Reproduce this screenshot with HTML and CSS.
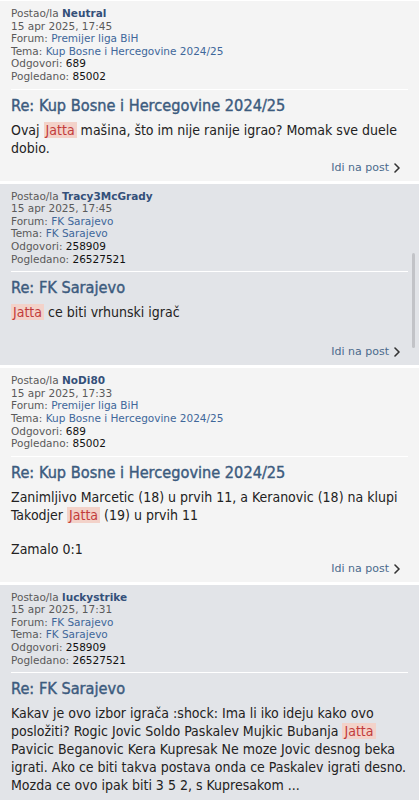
FILE: index.html
```html
<!DOCTYPE html>
<html lang="bs">
<head>
<meta charset="utf-8">
<meta name="viewport" content="width=device-width, initial-scale=1">
<title>Pretraga</title>
<link rel="stylesheet" href="styles.css">
</head>
<body>
<div class="page">
  <div class="post odd">
    <div class="meta">
      <div>Postao/la <a class="user">Neutral</a></div>
      <div>15 apr 2025, 17:45</div>
      <div>Forum: <a class="link">Premijer liga BiH</a></div>
      <div>Tema: <a class="link">Kup Bosne i Hercegovine 2024/25</a></div>
      <div>Odgovori: <span class="num">689</span></div>
      <div>Pogledano: <span class="num">85002</span></div>
    </div>
    <h3 class="title">Re: Kup Bosne i Hercegovine 2024/25</h3>
    <div class="content"><p>Ovaj <span class="hl">Jatta</span> mašina, što im nije ranije igrao? Momak sve duele dobio.</p></div>
    <div class="more"><a class="more-link">Idi na post <svg class="chev" viewBox="0 0 6 10" width="6" height="10"><polyline points="1,1 5,5 1,9" /></svg></a></div>
  </div>

  <div class="post even">
    <div class="meta">
      <div>Postao/la <a class="user">Tracy3McGrady</a></div>
      <div>15 apr 2025, 17:45</div>
      <div>Forum: <a class="link">FK Sarajevo</a></div>
      <div>Tema: <a class="link">FK Sarajevo</a></div>
      <div>Odgovori: <span class="num">258909</span></div>
      <div>Pogledano: <span class="num">26527521</span></div>
    </div>
    <h3 class="title">Re: FK Sarajevo</h3>
    <div class="content trailing"><p><span class="hl">Jatta</span> ce biti vrhunski igrač<br><br></p></div>
    <div class="more"><a class="more-link">Idi na post <svg class="chev" viewBox="0 0 6 10" width="6" height="10"><polyline points="1,1 5,5 1,9" /></svg></a></div>
  </div>

  <div class="post odd">
    <div class="meta">
      <div>Postao/la <a class="user">NoDi80</a></div>
      <div>15 apr 2025, 17:33</div>
      <div>Forum: <a class="link">Premijer liga BiH</a></div>
      <div>Tema: <a class="link">Kup Bosne i Hercegovine 2024/25</a></div>
      <div>Odgovori: <span class="num">689</span></div>
      <div>Pogledano: <span class="num">85002</span></div>
    </div>
    <h3 class="title">Re: Kup Bosne i Hercegovine 2024/25</h3>
    <div class="content"><p>Zanimljivo Marcetic (18) u prvih 11, a Keranovic (18) na klupi<br>Takodjer <span class="hl">Jatta</span> (19) u prvih 11</p><p>Zamalo 0:1</p></div>
    <div class="more"><a class="more-link">Idi na post <svg class="chev" viewBox="0 0 6 10" width="6" height="10"><polyline points="1,1 5,5 1,9" /></svg></a></div>
  </div>

  <div class="post even">
    <div class="meta">
      <div>Postao/la <a class="user">luckystrike</a></div>
      <div>15 apr 2025, 17:31</div>
      <div>Forum: <a class="link">FK Sarajevo</a></div>
      <div>Tema: <a class="link">FK Sarajevo</a></div>
      <div>Odgovori: <span class="num">258909</span></div>
      <div>Pogledano: <span class="num">26527521</span></div>
    </div>
    <h3 class="title">Re: FK Sarajevo</h3>
    <div class="content"><p>Kakav je ovo izbor igrača :shock: Ima li iko ideju kako ovo posložiti? Rogic Jovic Soldo Paskalev Mujkic Bubanja <span class="hl">Jatta</span> Pavicic Beganovic Kera Kupresak Ne moze Jovic desnog beka igrati. Ako ce biti takva postava onda ce Paskalev igrati desno. Mozda ce ovo ipak biti 3 5 2, s Kupresakom ...</p></div>
    <div class="more"><a class="more-link">Idi na post <svg class="chev" viewBox="0 0 6 10" width="6" height="10"><polyline points="1,1 5,5 1,9" /></svg></a></div>
  </div>
</div>
<div class="scroll-indicator"></div>
</body>
</html>
```
FILE: styles.css
```css
html, body {
  margin: 0;
  padding: 0;
  background: #ffffff;
}
body {
  font-family: "DejaVu Sans Condensed", "DejaVu Sans", sans-serif;
  color: #222222;
}
.page {
  padding-top: 1px;
  display: flex;
  flex-direction: column;
  gap: 3px;
}
.post {
  padding: 6px 11px 5px 11px;
}
.post.odd {
  background: #f4f4f4;
}
.post.even {
  background: #e2e4e8;
}
.meta {
  font-family: "DejaVu Sans", Verdana, sans-serif;
  font-size: 10.5px;
  line-height: 12.6px;
  color: #5a5a5a;
  padding-bottom: 6px;
  border-bottom: 1px solid #ffffff;
}
.user {
  font-weight: bold;
  color: #34507a;
}
.link {
  color: #40679a;
}
.num {
  color: #111111;
}
.title {
  margin: 5px 0 0 0;
  font-size: 16.2px;
  line-height: 22px;
  font-weight: normal;
  -webkit-text-stroke: 0.4px #3c5b7e;
  color: #3c5b7e;
}
.content {
  margin-top: 4px;
  font-size: 14px;
  line-height: 18px;
  color: #222222;
}
.content p {
  margin: 0;
}
.content p + p {
  margin-top: 16px;
}
.content.trailing {
  padding-bottom: 2px;
}
.hl {
  background: #f3d2c9;
  color: #c23b3b;
  padding: 0 2px;
}
.more {
  margin-top: 3px;
  display: flex;
  justify-content: flex-end;
  font-family: "DejaVu Sans", Verdana, sans-serif;
  font-size: 11px;
  line-height: 16px;
  padding-right: 8px;
}
.more-link {
  color: #4b6a8c;
  display: inline-flex;
  align-items: center;
  gap: 5px;
}
.chev {
  fill: none;
  stroke: #333333;
  stroke-width: 1.6;
  stroke-linecap: round;
  stroke-linejoin: round;
  width: 6px;
  height: 10px;
}
.scroll-indicator {
  position: absolute;
  top: 253px;
  right: 4px;
  width: 3px;
  height: 95px;
  border-radius: 2px;
  background: rgba(0, 0, 0, 0.14);
}
```
